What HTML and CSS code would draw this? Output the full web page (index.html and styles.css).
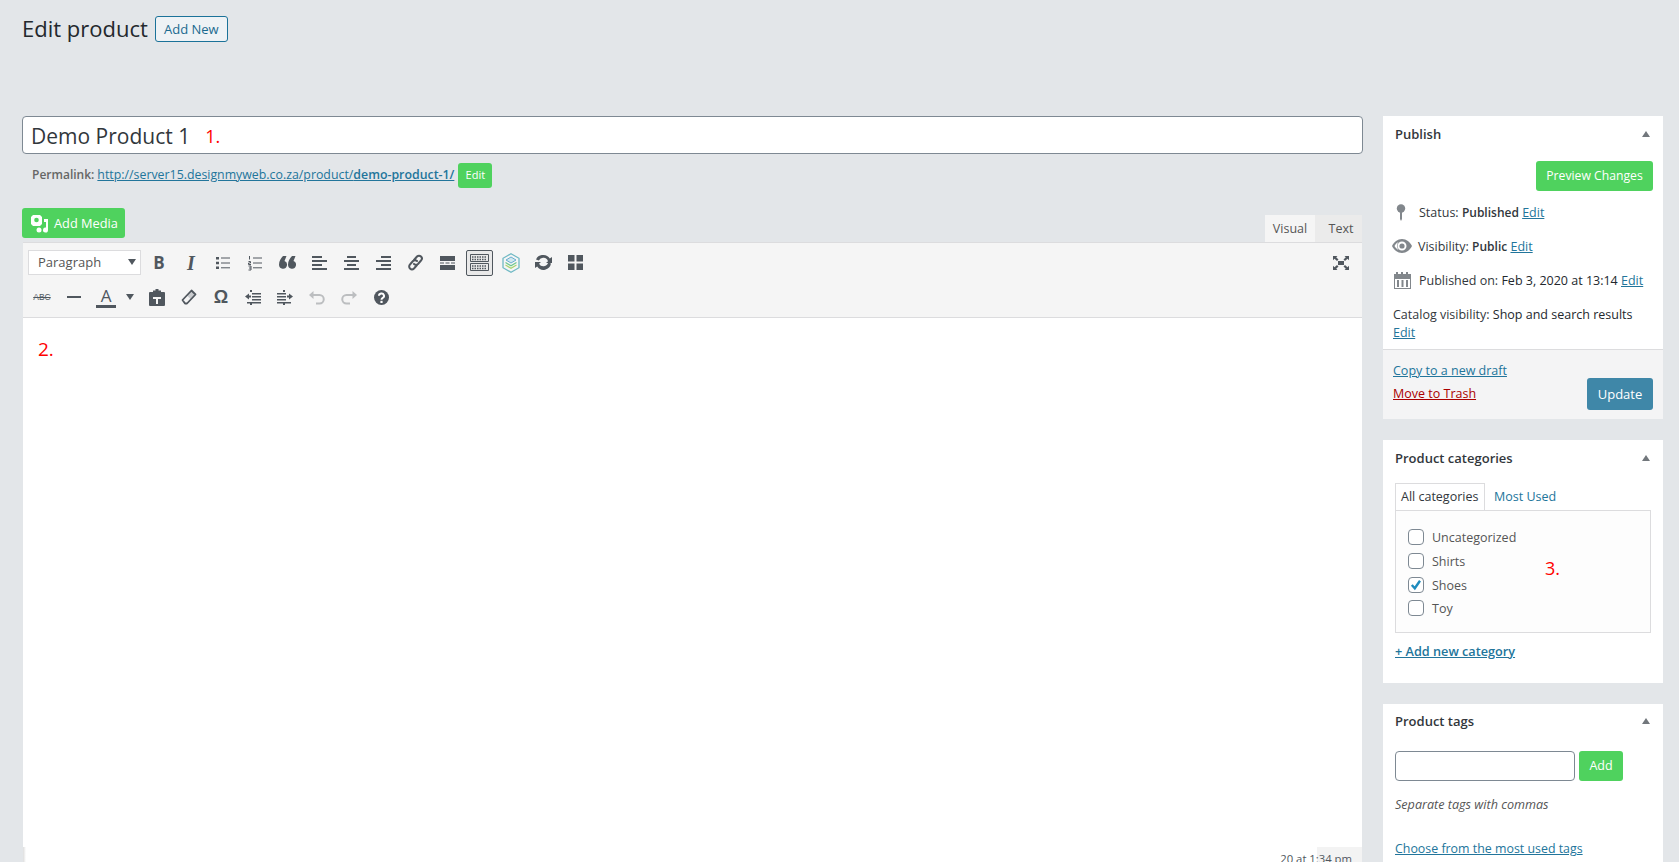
FILE: index.html
```html
<!DOCTYPE html>
<html lang="en">
<head>
<meta charset="utf-8">
<title>Edit product</title>
<link rel="stylesheet" href="styles.css">
</head>
<body>
<div class="page">
  <header class="head">
    <h1>Edit product</h1>
    <a class="add-new">Add New</a>
  </header>
  <div class="columns">
    <main class="main">
      <div class="title-box"><span>Demo Product 1</span><span class="mark mark-one">1.</span></div>
      <div class="permalink">
        <b>Permalink:</b>
        <a class="link" href="#">http://server15.designmyweb.co.za/product/<strong>demo-product-1/</strong></a>
        <span class="btn-small">Edit</span>
      </div>
      <div class="media-row">
        <span class="btn-media">
          <svg width="19" height="19" viewBox="0 0 19 19"><path fill="#fff" d="M3 1h7l2 2v7l-2 2H3L1 10V3z"/><circle cx="6.500" cy="6" r="2.300" fill="#4fd25e"/><path fill="#fff" d="M14 5h4v11a2.500 2.500 0 1 1-2-2.400V8h-2z"/><circle cx="9" cy="16" r="2.500" fill="#fff"/></svg>
          Add Media
        </span>
      </div>
      <div class="tabs">
        <span class="tab tab-on">Visual</span>
        <span class="tab tab-text">Text</span>
      </div>
      <section class="editor">
        <div class="toolbar">
          <div class="row">
            <span class="select">Paragraph<i class="caret"></i></span>
            <span class="tb"><b class="g-b">B</b></span>
            <span class="tb"><b class="g-i">I</b></span>
            <span class="tb"><svg width="16" height="16" viewBox="0 0 16 16"><path fill="#50575e" d="M1 2h3v2.500H1zM1 6.800h3v2.500H1zM1 11.500h3V14H1z"/><path stroke="#50575e" fill="none" d="M6 3h9M6 8h9M6 12.800h9"/></svg></span>
            <span class="tb"><svg width="16" height="16" viewBox="0 0 16 16"><path stroke="#50575e" fill="none" d="M6 3h9M6 8h9M6 12.800h9M2.500 1v3.500M1.500 6.500h2v1.500h-2v1.500h2.500M1.500 11h2.500v4H1.500M2 13h2"/></svg></span>
            <span class="tb"><svg width="17" height="14" viewBox="0 0 17 14"><path fill="#50575e" d="M4 0h3.500L5.500 5A4 4 0 1 1 0 8.800C0 5 2 2 4 0zM13 0h3.500l-2 5A4 4 0 1 1 9 8.800C9 5 11 2 13 0z"/></svg></span>
            <span class="tb"><svg width="15" height="15" viewBox="0 0 15 15"><path fill="#50575e" d="M0 1h10v2H0zM0 5h15v2H0zM0 9h10v2H0zM0 13h15v2H0z"/></svg></span>
            <span class="tb"><svg width="15" height="15" viewBox="0 0 15 15"><path fill="#50575e" d="M3 1h9v2H3zM0 5h15v2H0zM3 9h9v2H3zM0 13h15v2H0z"/></svg></span>
            <span class="tb"><svg width="15" height="15" viewBox="0 0 15 15"><path fill="#50575e" d="M5 1h10v2H5zM0 5h15v2H0zM5 9h10v2H5zM0 13h15v2H0z"/></svg></span>
            <span class="tb"><svg width="17" height="17" viewBox="0 0 17 17"><path stroke="#50575e" stroke-width="2" fill="none" stroke-linecap="round" d="M7 6l3-3.500a2.800 2.800 0 0 1 4 4L11 10a2.800 2.800 0 0 1-4 0M10 11l-3 3.500a2.800 2.800 0 0 1-4-4L6 7a2.800 2.800 0 0 1 4 0"/></svg></span>
            <span class="tb"><svg width="15" height="14" viewBox="0 0 15 14"><path fill="#50575e" d="M0 0h15v5H0zM0 6.500h4v1H0zM5.500 6.500h4v1h-4zM11 6.500h4v1h-4zM0 9h15v5H0z"/></svg></span>
            <span class="tb tb-on"><svg width="19" height="17" viewBox="0 0 19 17"><path fill="none" stroke="#50575e" d="M.5.500h18v7H.5zM.5 9.500h18v7H.5z"/><path stroke="#50575e" stroke-width="1.500" stroke-dasharray="1.500 1" d="M2 3h15M2 5.500h15M2 12h15M2 14.500h15"/></svg></span>
            <span class="tb"><svg width="18" height="20" viewBox="0 0 18 20"><path fill="none" stroke="#6fb9c4" stroke-width="1.300" d="M9 .8l8 4.500v9.400l-8 4.500-8-4.500V5.300z"/><path fill="#cfe8ee" stroke="#6aaed0" d="M9 4l5 3-5 3-5-3z"/><path fill="none" stroke="#6cc690" stroke-width="1.200" d="M3.500 9.500L9 12.800l5.500-3.300"/><path fill="none" stroke="#a6d56f" stroke-width="1.200" d="M3.500 12L9 15.300l5.500-3.300"/></svg></span>
            <span class="tb"><svg width="17" height="15" viewBox="0 0 17 15"><path fill="#50575e" d="M8.500 0a7.400 7.400 0 0 1 6.300 3.500L17 2v6h-6l2-1.700A5 5 0 0 0 3.800 5.500L1 4.400A7.600 7.600 0 0 1 8.500 0zM0 7h6L4 8.700a5 5 0 0 0 9.200-1.200l2.800 1.100A7.600 7.600 0 0 1 2.200 11.500L0 13z"/></svg></span>
            <span class="tb"><svg width="15" height="15" viewBox="0 0 15 15"><path fill="#50575e" d="M0 0h6.500v6.500H0zM8.500 0H15v6.500H8.500zM0 8.500h6.500V15H0zM8.500 8.500H15V15H8.500z"/></svg></span>
            <span class="tb tb-end"><svg width="16" height="14" viewBox="0 0 16 14"><path fill="#50575e" d="M5 5h6v4H5zM0 0h4.500L3.200 1.300 5.500 3.500 4 5 1.500 2.800 0 4.200zM16 0h-4.500l1.300 1.300-2.300 2.200L12 5l2.500-2.200L16 4.200zM0 14h4.500l-1.300-1.300 2.300-2.200L4 9l-2.500 2.200L0 9.800zM16 14h-4.500l1.300-1.300-2.300-2.200L12 9l2.500 2.200 1.500-1.400z"/></svg></span>
          </div>
          <div class="row">
            <span class="tb"><span class="g-abc">ABC</span></span>
            <span class="tb"><svg width="14" height="2" viewBox="0 0 14 2"><path fill="#50575e" d="M0 0h14v2H0z"/></svg></span>
            <span class="tb tb-color"><span class="g-a">A</span></span>
            <span class="tb-split"><i class="caret"></i></span>
            <span class="tb"><svg width="16" height="17" viewBox="0 0 16 17"><path fill="#50575e" fill-rule="evenodd" d="M1 3h3V1.500h2.500V0h3v1.500H12V3h3a1 1 0 0 1 1 1v12a1 1 0 0 1-1 1H1a1 1 0 0 1-1-1V4a1 1 0 0 1 1-1zm3 5v2h3v5h2v-5h3V8z"/></svg></span>
            <span class="tb"><svg width="16" height="16" viewBox="0 0 16 16"><path fill="#c9cbce" d="M10.500 1.500l4 4L10 10.500 6 6.500z"/><path fill="none" stroke="#50575e" stroke-width="1.800" stroke-linejoin="round" d="M10.500 1.500l4 4-8.500 9h-2L1.500 11z"/></svg></span>
            <span class="tb"><span class="g-omega">Ω</span></span>
            <span class="tb"><svg width="16" height="15" viewBox="0 0 16 15"><path fill="#50575e" d="M5 0h2v2H5zM7 3h9v1.500H7zM7 6h9v1.500H7zM7 9h9v1.500H7zM2 12h14v1.500H2zM5 13h2v2H5zM0 6.500L4 3.500v2h2v2H4v2z"/></svg></span>
            <span class="tb"><svg width="16" height="15" viewBox="0 0 16 15"><path fill="#50575e" d="M6 0h2v2H6zM0 3h9v1.500H0zM0 6h9v1.500H0zM0 9h9v1.500H0zM0 12h14v1.500H0zM6 13h2v2H6zM16 6.500L12 3.500v2h-2v2h2v2z"/></svg></span>
            <span class="tb"><svg width="16" height="15" viewBox="0 0 16 15"><path fill="none" stroke="#bcbec0" stroke-width="2" d="M3 5h7.500a4 4 0 0 1 0 8.500H7"/><path fill="#bcbec0" d="M0 5l4.500-4v8z"/></svg></span>
            <span class="tb"><svg width="16" height="15" viewBox="0 0 16 15"><path fill="none" stroke="#bcbec0" stroke-width="2" d="M13 5H5.500a4 4 0 0 0 0 8.500H9"/><path fill="#bcbec0" d="M16 5l-4.500-4v8z"/></svg></span>
            <span class="tb"><svg width="15" height="15" viewBox="0 0 15 15"><circle cx="7.500" cy="7.500" r="7.500" fill="#50575e"/><path fill="none" stroke="#fff" stroke-width="2" d="M5 5.800a2.500 2.300 0 1 1 3.700 2c-.9.500-1.200 1-1.200 1.900"/><path fill="#fff" d="M6.400 10.800h2.200V13H6.400z"/></svg></span>
          </div>
        </div>
        <div class="content"><span class="mark mark-two">2.</span></div>
        <div class="status"><span class="status-text">20 at 1:34 pm</span></div>
      </section>
    </main>
    <aside class="side">
      <section class="box box-publish">
        <h2>Publish<i class="up"></i></h2>
        <div class="preview-row"><span class="btn btn-preview">Preview Changes</span></div>
        <ul class="misc">
          <li><svg class="mi mi-pin" width="10" height="17" viewBox="0 0 10 17"><circle cx="5" cy="4.500" r="4.200" fill="#82878c"/><path fill="#82878c" d="M4 8h2v7l-1 2-1-2z"/></svg>Status: <b>Published</b> <a class="link" href="#">Edit</a></li>
          <li><svg class="mi mi-eye" width="20" height="14" viewBox="0 0 20 14"><path fill="#82878c" fill-rule="evenodd" d="M10 0c4.500 0 8 3 10 7-2 4-5.500 7-10 7S2 11 0 7c2-4 5.500-7 10-7zm0 2.500a4.500 4.500 0 1 0 0 9 4.500 4.500 0 0 0 0-9zM2.500 7c1 1.800 2.300 3.200 4 4A6 6 0 0 1 6.500 3C4.800 3.800 3.500 5.200 2.500 7z"/><circle cx="10" cy="7" r="2.600" fill="#82878c"/></svg>Visibility: <b>Public</b> <a class="link" href="#">Edit</a></li>
          <li><svg class="mi mi-cal" width="17" height="17" viewBox="0 0 17 17"><path fill="#82878c" fill-rule="evenodd" d="M0 2h2V0h2v2h3V0h2v2h3V0h2v2h3v15H0zm1 5v9h15V7z"/><path fill="#82878c" d="M3 8h2v7H3zM7.500 8h2v7h-2zM12 8h2v7h-2z"/></svg>Published on: <b class="soft">Feb 3, 2020 at 13:14</b> <a class="link" href="#">Edit</a></li>
          <li class="catalog">Catalog visibility: <b class="soft">Shop and search results</b><br><a class="link" href="#">Edit</a></li>
        </ul>
        <div class="actions">
          <div class="action-links">
            <a class="link" href="#">Copy to a new draft</a>
            <a class="trash" href="#">Move to Trash</a>
          </div>
          <span class="btn-update">Update</span>
        </div>
      </section>
      <section class="box box-cats">
        <h2>Product categories<i class="up"></i></h2>
        <div class="cat-tabs">
          <span class="cat-tab">All categories</span>
          <span class="cat-other">Most Used</span>
        </div>
        <div class="cat-panel">
          <label class="check"><i class="cb"></i>Uncategorized</label>
          <label class="check"><i class="cb"></i>Shirts</label>
          <label class="check"><i class="cb"><svg width="14" height="14" viewBox="0 0 14 14"><path fill="none" stroke="#1e8cbe" stroke-width="2.400" d="M2.800 7l3 3.300 5.200-7.500"/></svg></i>Shoes</label>
          <label class="check"><i class="cb"></i>Toy</label>
          <span class="mark mark-three">3.</span>
        </div>
        <a class="link add-cat" href="#">+ Add new category</a>
      </section>
      <section class="box box-tags">
        <h2>Product tags<i class="up"></i></h2>
        <div class="tag-row"><span class="tag-input"></span><span class="btn btn-add">Add</span></div>
        <p class="hint">Separate tags with commas</p>
        <a class="link choose" href="#">Choose from the most used tags</a>
      </section>
    </aside>
  </div>
</div>
</body>
</html>
```
FILE: styles.css
```css
* { box-sizing: border-box; }
html, body { margin: 0; height: 862px; overflow: hidden; }
body { background: #e3e6e9; color: #32373c; font: 12.500px/18px "Open Sans", sans-serif; }
.page { padding: 16px 16px 0 22px; }
a { text-decoration: none; }
.link { color: #22759b; text-decoration: underline; }
.head { display: flex; align-items: center; gap: 7px; height: 26px; }
h1 { margin: 0; font-size: 22px; font-weight: 400; line-height: 26px; color: #23282d; position: relative; top: -1px; }
.add-new { border: 1px solid #1b7299; border-radius: 3px; height: 26px; width: 73px; display: flex; align-items: center; justify-content: center; color: #1b6a8f; background: #eef2f5; font-weight: 500; font-size: 13px; }
.columns { display: flex; gap: 20px; margin-top: 74px; align-items: flex-start; }
.main { width: 1341px; }
.side { width: 280px; display: flex; flex-direction: column; gap: 21px; }
.title-box { height: 38px; background: #fff; border: 1px solid #7e8993; border-radius: 4px; padding: 0 8px; font-size: 21px; line-height: 38px; color: #32373c; display: flex; }
.mark { color: #f00; }
.mark-one { margin-left: 15px; font-size: 18px; line-height: 38px; }
.permalink { height: 26px; margin-top: 8px; padding-left: 10px; display: flex; align-items: center; gap: 3px; font-size: 12.350px; color: #666; }
.permalink b { font-weight: 600; font-size: 12px; }
.permalink strong { font-weight: 600; }
.btn-small { background: #4fd25e; color: #fff; border-radius: 3px; height: 25px; width: 34px; margin-left: 1px; display: flex; align-items: center; justify-content: center; font-size: 11px; }
.media-row { margin-top: 20px; height: 30px; }
.btn-media { display: inline-flex; align-items: center; gap: 5px; height: 30px; width: 103px; padding-left: 8px; background: #4fd25e; color: #fff; border-radius: 3px; font-size: 12.800px; white-space: nowrap; }
.tabs { display: flex; justify-content: flex-end; height: 27px; margin-top: -23px; padding-right: 1px; }
.tab { background: #ebebeb; width: 47px; display: flex; align-items: center; justify-content: center; font-size: 12.500px; color: #555; }
.tab-text { padding-left: 5px; }
.tab-on { background: #f5f5f5; width: 50px; }
.editor { margin-left: 1px; width: 1339px; background: #fff; height: 620px; display: flex; flex-direction: column; }
.toolbar { height: 76px; padding: 3px 0 0 3px; background: #f5f5f5; border-top: 1px solid #dcdcde; border-bottom: 1px solid #dcdcde; }
.row { display: flex; height: 34px; align-items: center; }
.row:first-child { padding-right: 5px; height: 33px; margin-bottom: 1px; }
.select { margin: 0 2px; width: 113px; height: 25px; background: #fff; border: 1px solid #dcdcde; padding-left: 9px; font-size: 13px; line-height: 23px; color: #555; position: relative; display: block; }
.select .caret { position: absolute; right: 4px; top: 8px; }
.caret { display: block; width: 0; height: 0; border-left: 4px solid transparent; border-right: 4px solid transparent; border-top: 6px solid #50575e; }
.tb { width: 32px; height: 28px; display: flex; align-items: center; justify-content: center; flex: none; }
.tb-on { width: 27px; height: 26px; margin: 0 2.500px; background: #e9e9e9; border: 1px solid #50575e; border-radius: 2px; }
.tb-end { margin-left: auto; }
.tb-split { width: 19px; height: 28px; display: flex; align-items: center; justify-content: flex-start; padding-left: 4px; }
.g-b { font: 700 17px/1 "Open Sans", sans-serif; color: #50575e; }
.g-i { font: italic 700 20px/1 "Liberation Serif", serif; color: #50575e; }
.g-abc { font: 400 8.500px/1 "Liberation Sans", sans-serif; color: #50575e; text-decoration: line-through; }
.g-a { font-size: 17px; line-height: 18px; color: #50575e; border-bottom: 3px solid #50575e; width: 20px; text-align: center; display: block; }
.g-omega { font: 700 18px/1 "Liberation Sans", sans-serif; color: #50575e; }
.content { flex: 1; padding: 18px 15px; }
.mark-two { font-size: 19px; line-height: 26px; }
.status { height: 15px; flex: none; background: linear-gradient(90deg, #ddd 0, #fff 3px, #fff 1294px, #f3f3f3 1294px); text-align: right; padding-right: 10px; font-size: 11.300px; line-height: 24px; color: #50575e; overflow: hidden; }
.box { background: #fff; position: relative; }
h2 { margin: 0; font-size: 13px; font-weight: 600; line-height: 18px; color: #32373c; display: flex; justify-content: space-between; align-items: center; padding: 9px 12px 0; }
.up { display: block; width: 0; height: 0; margin-right: 1px; border-left: 4px solid transparent; border-right: 4px solid transparent; border-bottom: 6px solid #72777c; }
.box-publish { height: 303px; display: flex; flex-direction: column; }
.preview-row { display: flex; justify-content: flex-end; padding: 18px 10px 0; }
.btn { background: #4fd25e; color: #fff; border-radius: 3px; height: 30px; display: flex; align-items: center; justify-content: center; font-size: 12.200px; line-height: 28px; }
.btn-preview { width: 117px; padding-bottom: 1px; }
.misc { list-style: none; margin: 0; padding: 13px 10px 0; flex: 1; }
.misc li { height: 34px; display: block; white-space: nowrap; line-height: 18px; }
.misc b { font-weight: 600; font-size: 12px; }
.misc b.soft { font-weight: 400; font-size: 12.500px; color: #23282d; }
.mi { display: inline-block; vertical-align: middle; margin-top: -3px; }
.mi-pin { margin: -3px 13px 0 3px; }
.mi-eye { margin: -3px 6px 0 -1px; }
.mi-cal { margin: -3px 8px 0 1px; }
.misc li.catalog { height: auto; }
.actions { height: 70px; border-top: 1px solid #dcdcde; background: #f4f4f5; padding: 12px 10px 0; display: flex; justify-content: space-between; }
.action-links { display: flex; flex-direction: column; gap: 5px; }
.trash { color: #a00; text-decoration: underline; }
.btn-update { background: #3f87a8; color: #fff; border-radius: 3px; width: 66px; height: 32px; margin-top: 16px; display: flex; align-items: center; justify-content: center; font-size: 13px; }
.box-cats { height: 243px; }
.cat-tabs { display: flex; padding: 16px 12px 0; height: 43px; align-items: flex-end; }
.cat-tab { width: 90px; height: 28px; border: 1px solid #dcdcde; border-bottom: 0; background: #fff; padding-left: 5px; line-height: 25px; margin-bottom: -1px; position: relative; }
.cat-other { color: #22759b; padding-left: 9px; line-height: 28px; height: 27px; }
.cat-panel { margin: 0 12px; height: 123px; border: 1px solid #dcdcde; background: #fdfdfd; padding: 16px 12px 0; position: relative; color: #555; }
.check { display: flex; align-items: center; gap: 8px; height: 23.500px; }
.check:first-child { margin-top: -1px; margin-bottom: 1px; }
.cb { width: 16px; height: 16px; margin-top: -2px; border: 1px solid #7e8993; border-radius: 4px; background: #fff; display: flex; align-items: center; justify-content: center; flex: none; }
.mark-three { position: absolute; left: 149px; top: 45px; font-size: 18px; line-height: 24px; }
.add-cat { display: inline-block; margin: 9px 12px 0; font-weight: 600; font-size: 12.700px; }
.box-tags { height: 170px; }
.box-tags h2 { padding-top: 8px; }
.tag-row { display: flex; gap: 4px; padding: 21px 12px 0; }
.tag-input { width: 180px; height: 30px; border: 1px solid #7e8993; border-radius: 4px; background: #fff; }
.btn-add { width: 44px; font-size: 12.500px; }
.hint { margin: 15px 12px 0; font-style: italic; font-size: 12.600px; color: #555; }
.choose { display: inline-block; margin: 26px 12px 0; font-size: 12.400px; }
```
